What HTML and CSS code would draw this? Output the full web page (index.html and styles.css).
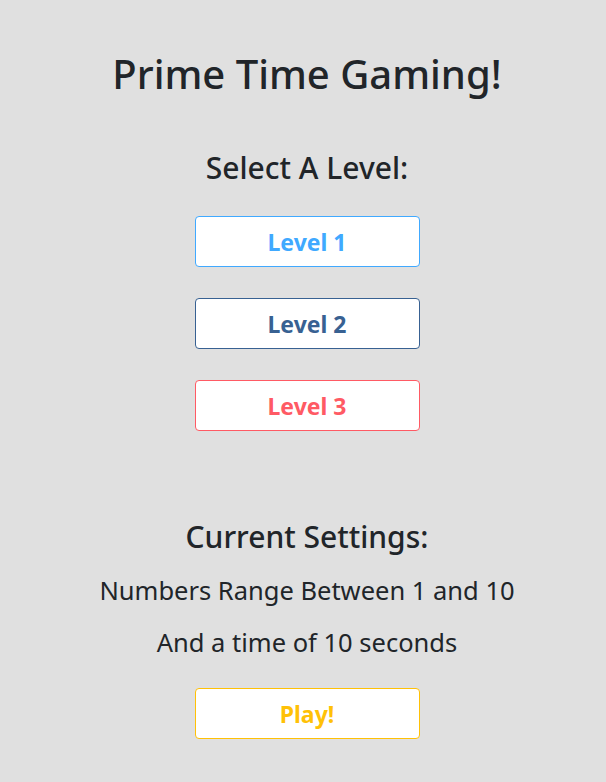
FILE: index.html
```html
<!DOCTYPE html>
<html lang="en">
<head>
<meta charset="utf-8">
<title>Prime Time Gaming!</title>
<link rel="stylesheet" href="styles.css">
</head>
<body>
<main class="page">
  <h1 class="title">Prime Time Gaming!</h1>
  <h2 class="subtitle">Select A Level:</h2>
  <div class="levels">
    <button class="btn btn-l1">Level 1</button>
    <button class="btn btn-l2">Level 2</button>
    <button class="btn btn-l3">Level 3</button>
  </div>
  <h2 class="subtitle settings-title">Current Settings:</h2>
  <p class="info">Numbers Range Between 1 and 10</p>
  <p class="info info-second">And a time of 10 seconds</p>
  <button class="btn btn-play">Play!</button>
</main>
</body>
</html>
```
FILE: styles.css
```css
html, body {
  margin: 0;
  padding: 0;
  background: #e0e0e0;
  height: 100%;
}
body {
  font-family: "Noto Sans", "Open Sans", sans-serif;
  color: #212529;
}
.page {
  display: flex;
  flex-direction: column;
  align-items: center;
  padding-top: 50px;
  padding-left: 8px;
}
.title {
  margin: 0;
  font-size: 40px;
  font-weight: 500;
  line-height: 48px;
}
.subtitle {
  margin: 53px 0 0;
  font-size: 30px;
  font-weight: 500;
  line-height: 34px;
}
.levels {
  display: flex;
  flex-direction: column;
  gap: 31px;
  margin-top: 31px;
}
.btn {
  width: 225px;
  height: 51px;
  background: #fff;
  border: 1px solid;
  border-radius: 4px;
  font-family: inherit;
  font-size: 23px;
  font-weight: 700;
  padding: 0;
  cursor: pointer;
}
.btn-l1 { color: #40a9ff; border-color: #40a9ff; }
.btn-l2 { color: #386192; border-color: #386192; }
.btn-l3 { color: #ff5a64; border-color: #ff5a64; }
.btn-play { color: #ffc107; border-color: #ffc107; margin-top: 31px; }
.settings-title {
  margin-top: 89px;
}
.info {
  margin: 22px 0 0;
  font-size: 25.5px;
  line-height: 29px;
}
.info-second {
  margin-top: 23px;
}
```
